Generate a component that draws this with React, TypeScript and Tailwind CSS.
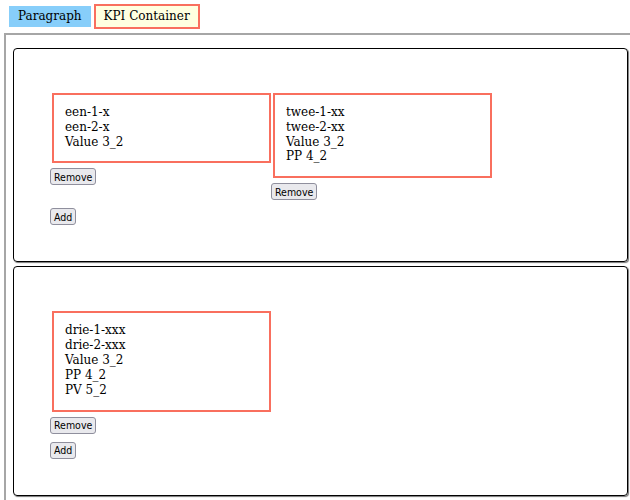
const kpis = [
  [
    ['een-1-x', 'een-2-x', 'Value 3_2'],
    ['twee-1-xx', 'twee-2-xx', 'Value 3_2', 'PP 4_2'],
  ],
  [['drie-1-xxx', 'drie-2-xxx', 'Value 3_2', 'PP 4_2', 'PV 5_2']],
];

function SmallButton({ label }: { label: string }) {
  return (
    <button className="h-[17px] px-[3px] rounded-[3px] border border-[#8f8f9d] bg-[#e9e9ed] text-[10.5px] leading-none text-black font-['DejaVu_Sans_Condensed','DejaVu_Sans',sans-serif]">
      {label}
    </button>
  );
}

function KpiBox({ lines }: { lines: string[] }) {
  return (
    <div className="flex flex-col items-start">
      <div className="ml-[2px] w-[219px] border-2 border-[#f96f5e] pt-[10px] pb-[12px] pl-[11px] leading-[14.9px]">
        {lines.map((l) => (
          <div key={l}>{l}</div>
        ))}
      </div>
      <div className="mt-[5px]">
        <SmallButton label="Remove" />
      </div>
    </div>
  );
}

function Card({ items }: { items: string[][] }) {
  return (
    <div className="rounded-[4px] border border-black shadow-[1px_1px_1px_#777] pt-[44px] pl-[36px] pb-[36px]">
      <div className="flex items-start">
        {items.map((lines, i) => (
          <KpiBox key={i} lines={lines} />
        ))}
      </div>
      <div className="mt-[8px]">
        <SmallButton label="Add" />
      </div>
    </div>
  );
}

export default function App() {
  return (
    <div className="w-[630px] h-[500px] overflow-hidden bg-white text-black text-[12px] leading-[14.7px] font-['DejaVu_Serif',serif]">
      <div className="flex items-baseline gap-[3px] pt-[4px] pl-[9px]">
        <div className="bg-[#87cefa] px-[9px] py-[3px]">Paragraph</div>
        <div className="bg-[#ffffe0] border-2 border-[#f96f5e] px-[8px] py-[3px]">KPI Container</div>
      </div>
      <div className="mt-[4px] ml-[4px] w-[633px] border-2 border-[#a6a6a6] pt-[13px] px-[7px] pb-[10px]">
        <div className="flex flex-col gap-[4px]">
          {kpis.map((items, i) => (
            <Card key={i} items={items} />
          ))}
        </div>
      </div>
    </div>
  );
}
